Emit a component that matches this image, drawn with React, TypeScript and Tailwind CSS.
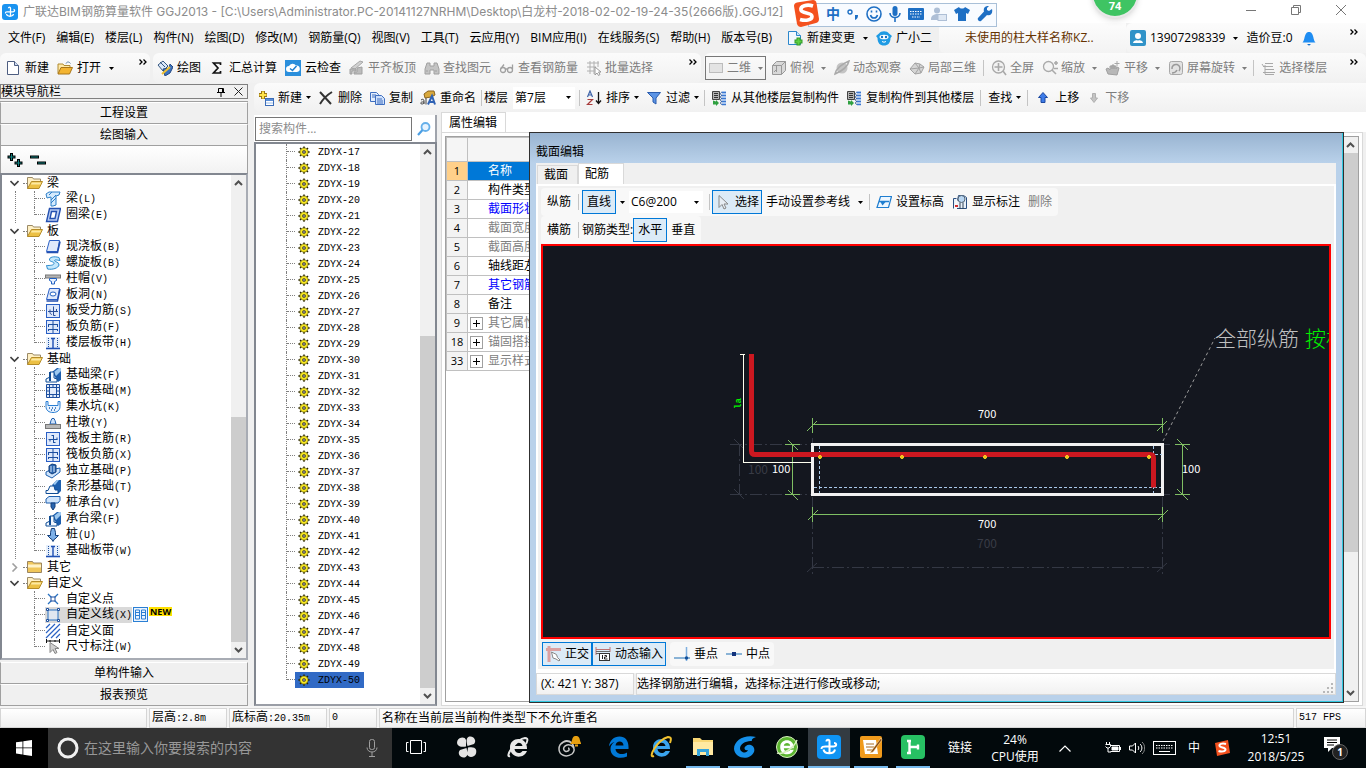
import React from "react";
import type { ReactNode } from "react";

/* ---------- icons ---------- */

const strip = (
  <>
    <rect x="1" y="2" width="14" height="12" fill="#e6effb" />
    <path d="M3.500 3v9M12.500 3v9" stroke="#1d4f9f" strokeDasharray="1 1" />
    <path d="M8 3v10M6 3.500h4" stroke="#1d4fb4" strokeWidth="1.400" />
    <path d="M1 13.500h14" stroke="#1d4fb4" strokeWidth="1.600" />
  </>
);
const beam3d = (
  <>
    <path d="M7 5l5-4h4v12l-3 2z" fill="#1d5fae" />
    <path d="M9 5l5-4h2v3l-5 5z" fill="#9cc8f0" />
    <path d="M1 15v-3l4-2V5h4v6l3 1v3z" fill="#f4f9ff" stroke="#0f4c94" />
    <path d="M5 5v9" stroke="#0f4c94" strokeWidth="2" />
  </>
);

const ICONS: Record<string, ReactNode> = {
  logo: (
    <>
      <rect width="16" height="16" rx="3" fill="#1a93f0" />
      <path d="M6.500 4.200c0-1.500 2-1.500 2 0v8.300M3.500 9.500c0-2 1-1.700 2.500-1.700h5c2 0 2-2.300.5-2.300M4.500 10c.5 3 6.500 3 7 0" stroke="#fff" strokeWidth="1.300" fill="none" />
    </>
  ),
  page: (
    <>
      <path d="M2.500 1.500h7l4 4v9h-11z" fill="#fff" stroke="#4d5d80" />
      <path d="M9.500 1.500v4h4" fill="#cfdcf2" stroke="#4d5d80" />
    </>
  ),
  open: (
    <>
      <path d="M1 13.500V4h5l1 1.500h6V8" fill="#ffe9a6" stroke="#b08a30" />
      <path d="M1 14l3-6.500h11.500L12.500 14z" fill="#f3b431" stroke="#a8761a" />
      <path d="M9 3.500c1-2 3-2 4.500 0" stroke="#5b7fa5" fill="none" />
    </>
  ),
  folder: (
    <>
      <path d="M.5 13.500v-11h5l1 1.500h7v3" fill="#fff0c4" stroke="#9b8a66" />
      <path d="M.5 13.500l4-7h11l-3.500 7z" fill="#ecc044" stroke="#b58c28" />
      <path d="M4.800 7.500h9.500l-1 2h-9.500z" fill="#fde9a0" />
    </>
  ),
  folderShut: (
    <>
      <path d="M.5 13.500v-11h5l1 1.500h8v9.500z" fill="#f0c65a" stroke="#9b8560" />
      <path d="M1 5.500h13v3H1z" fill="#fff2c8" />
    </>
  ),
  paint: (
    <>
      <path d="M1 5l5-4 5 5-5 5z" fill="#dbe8f8" stroke="#365780" />
      <path d="M3 2l5 5" stroke="#365780" />
      <path d="M6 9l6-1 1-4 3 3-3 6-5 3z" fill="#3c72c0" stroke="#254a82" />
      <path d="M5 14l8-7" stroke="#f0c030" strokeWidth="2" />
    </>
  ),
  sigma: <path d="M11.500 5V3h-7L9 8l-4.500 5h7v-2" fill="none" stroke="#111" strokeWidth="1.700" />,
  cloud: (
    <>
      <rect width="16" height="16" fill="#2b8fdc" />
      <path d="M4 12a3 3 0 010-6 4 4 0 017-.5A3 3 0 0112 12z" fill="#fff" />
      <path d="M5 8.500l2.500 2 4-4.500" stroke="#1e7fd0" strokeWidth="1.500" fill="none" />
    </>
  ),
  align: (
    <>
      <path d="M2 8l9-7 3 1-8 7z" fill="#d0d0d0" stroke="#a8a8a8" />
      <path d="M1 9h6v2H3v3H1zM8 8l5-1v7H5v-2h3z" fill="#bcbcbc" stroke="#a0a0a0" />
    </>
  ),
  binoc: <path d="M3 3h3v3h4V3h3l2 6v5h-5v-4H6v4H1V9zM3 10v2M12 10v2" fill="#c4c4c4" stroke="#a0a0a0" />,
  glasses: (
    <g fill="none" stroke="#a0a0a0" strokeWidth="1.300">
      <circle cx="4" cy="10" r="2.500" />
      <circle cx="11" cy="10" r="2.500" />
      <path d="M6.500 9h2M2 8.500l3-4M13.500 9V4.500" />
    </g>
  ),
  gridsel: (
    <>
      <path d="M1 3h12M1 7h9M1 11h7M4 1v13M8 1v13M12 1v6" stroke="#b0b0b0" />
      <path d="M9 7v8l2-2 1.500 2.500 1.500-1-1.500-2.500H15z" fill="#fff" stroke="#999" />
    </>
  ),
  flat: <rect x="1.500" y="3.500" width="13" height="9" fill="#e3e3e3" stroke="#bcbcbc" />,
  cube: (
    <>
      <path d="M1.500 5.500l4-4h9v9l-4 4h-9z" fill="#d8d8d8" stroke="#989898" />
      <path d="M1.500 5.500h9v9M10.500 5.500l4-4M3 12l3-3M5.500 6v6" stroke="#989898" fill="none" />
    </>
  ),
  orbit: (
    <>
      <circle cx="8" cy="8" r="5.500" fill="#c4c4c4" />
      <path d="M1 14C2 9 8 4 15 1c-1 5-7 10-14 13z" fill="none" stroke="#aaa" strokeWidth="1.500" />
    </>
  ),
  local3d: (
    <>
      <path d="M1 9l5-6 5 1 4 3-3 6-6 1z" fill="#d5d5d5" stroke="#a3a3a3" />
      <path d="M6 3l4 5-4 6M11 4l-1 4 5-1M1 9l9-1 2 5" stroke="#a3a3a3" />
    </>
  ),
  full: (
    <>
      <circle cx="7.500" cy="7" r="6" fill="#f2f2f2" stroke="#a8a8a8" strokeWidth="1.300" />
      <path d="M7.500 3v8M3.500 7h8M12 11l3 4" stroke="#a8a8a8" strokeWidth="1.600" />
    </>
  ),
  zoomIcon: (
    <>
      <circle cx="6.500" cy="6.500" r="5" fill="#f4f4f4" stroke="#aaa" strokeWidth="1.300" />
      <path d="M10 10l4 4M12 3h4M14 1v4M12 8.500h4" stroke="#aaa" strokeWidth="1.600" />
    </>
  ),
  hand: (
    <>
      <path d="M3 14l-2-5 2-1 2 2V6h2v3-4h2v4-3h2v3l1-2 2 1-2 7z" fill="#b8b8b8" stroke="#a0a0a0" />
      <path d="M12 1v5M9.500 3.500h5" stroke="#a8a8a8" />
    </>
  ),
  rotate: (
    <>
      <rect x="1.500" y="1.500" width="13" height="13" rx="2" fill="#e2e2e2" stroke="#a8a8a8" />
      <path d="M4 9a4 4 0 117 2M4 13c3 0 4-1 5-3" fill="none" stroke="#999" strokeWidth="1.500" />
    </>
  ),
  floors: <path d="M5 3.500h8M3 6.500h5M7 6.500h6M5 9.500h9M3 12.500h12M5 14.500h9M5 5v9M2 4l2 3" stroke="#a8a8a8" fill="none" />,
  add: (
    <>
      <path d="M5 1v8M1 5h8" stroke="#9a7614" strokeWidth="4" />
      <path d="M5 1.500v7M1.500 5h7" stroke="#ffe34a" strokeWidth="2" />
      <rect x="7.500" y="8.500" width="8" height="7" fill="#fff" stroke="#3c6db8" />
      <path d="M8 10h7" stroke="#5b8ed6" strokeWidth="2" />
      <path d="M8 13h7" stroke="#9cc0ee" />
    </>
  ),
  del: <path d="M2 2l11 12M14 2C9 5 5 9 2 14" stroke="#333" strokeWidth="2" fill="none" />,
  copy: (
    <>
      <path d="M1.500 2.500h6l2 2v7h-8z" fill="#e4eefc" stroke="#3f6fc0" />
      <path d="M3 5h4M3 7h4" stroke="#3f6fc0" />
      <path d="M6.500 5.500h6l3 3v6h-9z" fill="#cfe0fa" stroke="#3f6fc0" />
      <path d="M8 9h5M8 11h6M8 13h6" stroke="#3f6fc0" />
    </>
  ),
  rename: (
    <>
      <path d="M4 4l4-3h6l1 4-4 2-6 1z" fill="#d9a93c" stroke="#8a6420" />
      <path d="M1 10c2-1.500 3-.5 3 1v3M4 12c-4-.5-4 2-2 2 1 0 2-.5 2-1.500M6 8v6.500" stroke="#444" fill="none" />
      <path d="M8 14.500L12 6l3 8.500M9.500 12h4" stroke="#2f62b4" strokeWidth="2" fill="none" />
    </>
  ),
  sort: (
    <>
      <path d="M1.500 7L4 1l2.500 6M2.500 5h3" stroke="#3c62a8" strokeWidth="1.200" fill="none" />
      <path d="M1.500 9.500h5l-5 5h5" stroke="#a83c3c" strokeWidth="1.200" fill="none" />
      <path d="M12.500 2v11M10 10.500l2.500 3 2.500-3" stroke="#111" strokeWidth="1.300" fill="none" />
    </>
  ),
  funnel: <path d="M1.500 2.500h13L10 8v6l-3-2V8z" fill="#5b93e4" stroke="#2a5cae" />,
  floorCopy: (
    <>
      <path d="M1.500 1.500h7v8h-7z" fill="#b4b4b4" stroke="#444" />
      <path d="M3 3.500h4M3 5.500h4M3 7.500h4" stroke="#333" />
      <path d="M2 10.500v4h3v1.500l3-3-3-3v1.500z" fill="#2fa040" />
      <path d="M11 1v14h4V1z" fill="#cfe0f8" />
      <path d="M11 2.500h4M11 5.500h4M11 8.500h4M11 11.500h4M11 14.500h4" stroke="#3c78d0" strokeWidth="1.600" />
      <path d="M11 2c-2 1-2 2.500 0 3.500-2 .5-2 2.500 0 3-2 .5-2 2.500 0 3-2 .5-2 2.500 0 3" stroke="#27559c" />
    </>
  ),
  up: <path d="M8 2.500l4.500 5H10v5H6v-5H3.500z" fill="#3d7be8" stroke="#1c48a0" />,
  down: <path d="M8 12.500l3.500-4.500H9.500V3.500h-3V8h-2z" fill="#c4c4c4" stroke="#b0b0b0" />,
  newChange: (
    <>
      <path d="M1.500 1.500h8l4 4v9h-12z" fill="#f2f9ff" stroke="#2b87cc" />
      <path d="M9.500 1.500v4h4" fill="#cde6f8" stroke="#2b87cc" />
      <path d="M11.500 7.500v8M7.500 11.500h8" stroke="#2f9a2a" strokeWidth="4" />
      <path d="M11.500 8.500v6M8.500 11.500h6" stroke="#5fd042" strokeWidth="2" />
    </>
  ),
  mascot: (
    <>
      <path d="M0 6l3-2.500c2-3 8-3 10 0L16 6l-1.500 2c0 5-2.500 7.500-6.500 7.500S1.500 13 1.500 8z" fill="#1f9be4" />
      <ellipse cx="8" cy="7" rx="4.500" ry="2.300" fill="#fff" />
      <circle cx="6" cy="7" r="1.200" fill="#1770c0" />
      <circle cx="10" cy="7" r="1.200" fill="#1770c0" />
      <path d="M6 11.500q2 1.500 4 0" stroke="#fff" fill="none" />
    </>
  ),
  user: (
    <>
      <rect width="16" height="16" rx="2" fill="#3193c8" />
      <circle cx="8" cy="6" r="3" fill="#fff" />
      <path d="M3 13c0-4 10-4 10 0z" fill="#fff" />
      <path d="M6.500 9l1.500 2 1.500-2z" fill="#3193c8" />
    </>
  ),
  bell: (
    <>
      <path d="M1.500 12.500c2.500-2 1.500-9 5.500-10.500h2c4 1.500 3 8.500 5.500 10.500z" fill="#1f8df2" />
      <path d="M6 14h4l-2 1.800z" fill="#1470cc" />
    </>
  ),
  find: (
    <>
      <circle cx="9.500" cy="6" r="4" fill="#e8f4ff" stroke="#66b0ea" strokeWidth="1.800" />
      <path d="M6.500 9L2 14" stroke="#4c9fe4" strokeWidth="2.200" />
    </>
  ),
  gear: (
    <>
      <path d="M8 .5v15M.5 8h15M2.700 2.700l10.600 10.600M13.300 2.700L2.700 13.300" stroke="#2a2600" strokeWidth="2" />
      <circle cx="8" cy="8" r="5.500" fill="#f8e820" stroke="#4a4400" strokeWidth=".8" />
      <circle cx="8" cy="8" r="1.700" fill="#fff" stroke="#222" strokeWidth="1.400" />
    </>
  ),
  beam: (
    <>
      <path d="M1 3l3-2h11l-1 3-3 1v9l-3 1H6V6L2 7z" fill="#d4eafd" stroke="#2d7fc8" />
      <path d="M6 9l5-5M6 12l5-5M4 4l3-3" stroke="#2d7fc8" />
    </>
  ),
  ring: <path d="M4.500 1.500h11l-3 13h-11zM6.500 4.500l-1.500 7h5l1.500-7z" fill="#b8cdf4" fillRule="evenodd" stroke="#2450b0" strokeWidth="1.400" />,
  slab: (
    <>
      <path d="M4.500 1.500h10l-2 11h-11z" fill="#dfe9fb" stroke="#2a5fc4" />
      <path d="M1.500 13.500h11l2.500-11" stroke="#2450b0" strokeWidth="1.600" fill="none" />
    </>
  ),
  spiral: <path d="M14 2.500C9 1 4 2 4.500 5c.5 2 5 1.500 4.500 3.500-.5 2-4 2-7.500 2l1 3.500c5 1 11-1 11.500-4 .5-3-4.500-3-4.500-4.500C9.500 4.500 12 5 15 5.500z" fill="#c4e8fc" stroke="#2d8ccf" />,
  cap: (
    <>
      <rect x=".5" y="4" width="15" height="3" fill="#b4b4b4" stroke="#777" />
      <path d="M4.500 7.500h7v2l-2 1v2.500h-3v-2.500l-2-1z" fill="#e6f0ff" stroke="#1f5fc0" />
    </>
  ),
  hole: (
    <>
      <path d="M4.500 1.500h10l-2 11h-11z" fill="#dfe9fb" stroke="#2a5fc4" />
      <path d="M1.500 14h11l2.500-12" stroke="#2450b0" strokeWidth="1.400" fill="none" />
      <ellipse cx="8" cy="7" rx="3" ry="2" fill="#fff" stroke="#1f5fc0" />
    </>
  ),
  rebarS: (
    <>
      <rect x="1.500" y="1.500" width="13" height="13" fill="#dfe9fb" stroke="#2a5fc4" />
      <path d="M3 8.500h10M8.500 3.500v9h2M5 6.500v3c0 1 1 2 2 2M11.500 6v3" stroke="#2a4f98" fill="none" />
    </>
  ),
  main: (
    <>
      <rect x="1.500" y="1.500" width="13" height="13" fill="#dfe9fb" stroke="#2a5fc4" />
      <path d="M3.500 8.500h9M8.500 4v8M5 8.500v2M12 6.500v2M8.500 4.500h-2M8.500 11.500h2" stroke="#1d4f9f" fill="none" />
    </>
  ),
  rebarF: (
    <>
      <rect x="1.500" y="1.500" width="13" height="13" fill="#dfe9fb" stroke="#2a5fc4" />
      <path d="M3 5.500h10M3 10.500h10M8 2v12M3.500 5v3M12.500 5v3M3.500 10v2M12.500 10v2" stroke="#1d4f9f" fill="none" />
    </>
  ),
  strip,
  beam3d,
  raft: <path d="M1.500 1.500h13v13h-13zM4.500 4.500h7v7h-7zM4.500 1v14M11.500 1v14M1 4.500h14M1 11.500h14M8 1v3M8 12v3M1 8h3M12 8h3" fill="#e2ecfb" stroke="#1d4f9f" />,
  sump: (
    <>
      <path d="M1 2.500h2v4h10v-4h2v5c0 4-3 6-7 6s-7-2-7-6z" fill="#e8f3ff" stroke="#2a7fd4" />
      <path d="M4 9h1M7 9h1M10 9h1M6 11h1M9 11h1" stroke="#1d5fae" strokeWidth="1.400" />
    </>
  ),
  pier: (
    <>
      <path d="M5 9l1-3.500 1-2h2l1 2L11 9z" fill="#cfe2fb" stroke="#1f5fae" />
      <rect x=".5" y="9.500" width="15" height="4" fill="#b8b8b8" stroke="#777" />
    </>
  ),
  iso: (
    <>
      <path d="M1 9l4-2 10-2v4l-8 6-6-3z" fill="#cfe4fb" stroke="#1d5fae" />
      <path d="M4 9V3l3-2 4 1v7l-4 2z" fill="#2a66b0" stroke="#123f7c" />
      <path d="M6 3v6M9 3v6" stroke="#d7e8fb" />
    </>
  ),
  stripF: (
    <>
      <path d="M7 6l5-5h4v11l-3 3z" fill="#1d5fae" />
      <path d="M8 5l4-4h2l-4 5z" fill="#9cc8f0" />
      <path d="M1 14.500v-3h2L5 7h4l1 4h3v3.500z" fill="#f4f9ff" stroke="#0f4c94" />
    </>
  ),
  pileCap: (
    <>
      <path d="M1 4l3-2.500h11v4L13 8H1z" fill="#cfe4fb" stroke="#1d5fae" />
      <path d="M6 8h4v4l-2 3-2-3z" fill="#2a66b0" stroke="#123f7c" />
    </>
  ),
  pile: <path d="M6.500 1.500h3l1 4v3h3L10 12H9.500L8 14.500 6.500 12H6L2.500 8.500h3v-3z" fill="#7db0e8" stroke="#123f7c" />,
  cross: (
    <>
      <path d="M3 3l10 10M13 3L3 13" stroke="#2a72c0" strokeWidth="1.300" />
      <rect x="6" y="6" width="4" height="4" fill="#fff" stroke="#1d4f9f" />
    </>
  ),
  poly: (
    <>
      <path d="M3 3h10v10H3z" fill="#e0e6f0" stroke="#2a72c0" />
      <path d="M1.500 1.500h2v2h-2zM12.500 1.500h2v2h-2zM1.500 12.500h2v2h-2zM12.500 12.500h2v2h-2z" fill="#fff" stroke="#1d4f9f" />
    </>
  ),
  hatch: <path d="M1 5l4-4M1 10l9-9M1 15L15 1M6 15l9-9M11 15l4-4" stroke="#2a62c4" strokeWidth="1.200" />,
  dim: (
    <>
      <path d="M1.500 0v4M14.500 0v4M2 2h12M5 1v2M10 1v2" stroke="#111" />
      <path d="M5 3.500v10l3-3 2 4 2-1-2-4h4z" fill="#d0d0d0" stroke="#888" />
    </>
  ),
  book: (
    <>
      <rect x=".5" y=".5" width="14" height="14" fill="#eaf4ff" stroke="#2a7fd4" />
      <path d="M2.500 3h4v9h-4zM8.500 3h4v9h-4zM3 5.500h3M3 8.500h3M9 5.500h3M9 8.500h3" stroke="#2a7fd4" fill="none" />
    </>
  ),
  cursor: <path d="M4 1.500v12l3-3 2 4.500 2-1-2-4h4z" fill="#e8eef4" stroke="#888" />,
  level: (
    <>
      <path d="M4.500 2.500h11l-3 11H1z" fill="#eef7ff" stroke="#1f7ed0" strokeWidth="1.200" />
      <path d="M3 7.500h10" stroke="#1f7ed0" strokeWidth="1.500" />
      <path d="M4.500 8h5l-3 3.500z" fill="#1f7ed0" />
    </>
  ),
  showDim: (
    <>
      <path d="M1.500 14.500v-10h3M5 14.500h9.500v-11l-3-2h-5l-1 5" fill="#e8f0fa" stroke="#2a4f80" />
      <circle cx="9.500" cy="5" r="3.500" fill="#b9d6f2" stroke="#567" />
      <path d="M8 8.500V15M11 8.500V15" stroke="#345" />
      <path d="M3 12h3" stroke="#d03030" strokeWidth="2" />
    </>
  ),
  ortho: (
    <>
      <path d="M1 3.500h15M4 0v16" stroke="#dca0a0" strokeWidth="3" />
      <path d="M6.500 6l5 2.500 1 3L15 14l-1 1-3-2-3-1z" fill="#fff" stroke="#888" />
    </>
  ),
  dyn: (
    <>
      <path d="M1 1v8M15 1v5M1 3.500h14" stroke="#c07070" />
      <rect x="4.500" y="7.500" width="10" height="7" fill="#fff" stroke="#333" />
      <path d="M7.500 9v4M9.500 9.500h2v1.500h-2v2h3" stroke="#222" fill="none" />
      <path d="M1 5.500h14M1 7.500h3" stroke="#666" />
    </>
  ),
  perp: (
    <>
      <path d="M0 12h16" stroke="#1c6fb4" />
      <path d="M12.500 1v14" stroke="#7fb0e0" strokeWidth="1.500" />
      <circle cx="12.500" cy="12" r="1.700" fill="#134f9a" />
    </>
  ),
  mid: (
    <>
      <path d="M0 8h16" stroke="#1c6fb4" />
      <rect x="6" y="6" width="4" height="4" fill="#12327c" />
    </>
  ),
};

function Icon({ n, className = "h-4 w-4" }: { n: string; className?: string }) {
  return (
    <svg viewBox="0 0 16 16" className={`shrink-0 ${className}`} fill="none" aria-hidden="true">
      {ICONS[n]}
    </svg>
  );
}

function Caret({ className = "" }: { className?: string }) {
  return (
    <svg viewBox="0 0 5 3" className={`h-[3px] w-[5px] shrink-0 ${className}`} aria-hidden="true">
      <path d="M0 0h5L2.500 3z" fill="currentColor" />
    </svg>
  );
}

function More() {
  return (
    <svg viewBox="0 0 8 6" className="h-[6px] w-2 shrink-0" fill="none" stroke="#000" strokeWidth="1.300" aria-label="更多">
      <path d="M.5.5L3 3 .5 5.500M4.500.5L7 3 4.500 5.500" />
    </svg>
  );
}

function Sep({ wide }: { wide?: boolean }) {
  return <span className={`h-4 w-px shrink-0 bg-[#c4c4c4] ${wide ? "mx-[3px]" : "mx-[2px]"}`} />;
}

/* Latin characters in the list font take half the width of a CJK one. */
function Mono({ children }: { children: string }) {
  return (
    <>
      {children.split(/([\x20-\x7e]+)/).map((part, i) =>
        i % 2 ? (
          <span key={i} className="whitespace-pre font-['Liberation_Mono',monospace] text-[10px]">
            {part}
          </span>
        ) : (
          part
        ),
      )}
    </>
  );
}

type ToolProps = { icon?: string; label: string; caret?: boolean; tight?: boolean; off?: boolean; frame?: "grey" | "blue" };

function Tool({ icon, label, caret, tight, off, frame }: ToolProps) {
  const border = frame === "blue" ? "border border-[#0078d7] bg-[#dcebf7]" : frame === "grey" ? "border border-[#777]" : "";
  return (
    <button
      type="button"
      disabled={off}
      className={`flex h-6 shrink-0 items-center ${frame && icon ? "px-[2px]" : "px-1"} ${off ? "gap-[3px] text-[#7d7d7d]" : "gap-1 text-black"} ${border}`}
    >
      {icon && <Icon n={icon} />}
      <span>{label}</span>
      {caret && <Caret className={tight ? "" : "ml-1"} />}
    </button>
  );
}

/* ---------- data ---------- */

const MENUS = ["文件(F)", "编辑(E)", "楼层(L)", "构件(N)", "绘图(D)", "修改(M)", "钢筋量(Q)", "视图(V)", "工具(T)", "云应用(Y)", "BIM应用(I)", "在线服务(S)", "帮助(H)", "版本号(B)"];

type Group = { name: string; closed?: boolean; items: [string, string][] };

const TREE: Group[] = [
  { name: "梁", items: [["beam", "梁(L)"], ["ring", "圈梁(E)"]] },
  {
    name: "板",
    items: [["slab", "现浇板(B)"], ["spiral", "螺旋板(B)"], ["cap", "柱帽(V)"], ["hole", "板洞(N)"], ["rebarS", "板受力筋(S)"], ["rebarF", "板负筋(F)"], ["strip", "楼层板带(H)"]],
  },
  {
    name: "基础",
    items: [["beam3d", "基础梁(F)"], ["raft", "筏板基础(M)"], ["sump", "集水坑(K)"], ["pier", "柱墩(Y)"], ["main", "筏板主筋(R)"], ["rebarF", "筏板负筋(X)"], ["iso", "独立基础(P)"], ["stripF", "条形基础(T)"], ["pileCap", "桩承台(V)"], ["beam3d", "承台梁(F)"], ["pile", "桩(U)"], ["strip", "基础板带(W)"]],
  },
  { name: "其它", closed: true, items: [] },
  { name: "自定义", items: [["cross", "自定义点"], ["poly", "自定义线(X)"], ["hatch", "自定义面"], ["dim", "尺寸标注(W)"]] },
];

const MEMBERS = Array.from({ length: 34 }, (_, i) => `ZDYX-${i + 17}`);

const PROPS: { n: number; name: string; tone: string; plus?: boolean }[] = [
  { n: 1, name: "名称", tone: "bg-[#0078d7] text-white" },
  { n: 2, name: "构件类型", tone: "text-black" },
  { n: 3, name: "截面形状", tone: "text-[#0000ff]" },
  { n: 4, name: "截面宽度", tone: "text-[#808080]" },
  { n: 5, name: "截面高度", tone: "text-[#808080]" },
  { n: 6, name: "轴线距左", tone: "text-black" },
  { n: 7, name: "其它钢筋", tone: "text-[#0000ff]" },
  { n: 8, name: "备注", tone: "text-black" },
  { n: 9, name: "其它属性", tone: "text-[#808080]", plus: true },
  { n: 18, name: "锚固搭接", tone: "text-[#808080]", plus: true },
  { n: 33, name: "显示样式", tone: "text-[#808080]", plus: true },
];

/* ---------- top bars ---------- */

function TitleBar() {
  return (
    <header className="relative flex h-[23px] shrink-0 items-center bg-white pl-[2px] text-[#8c8c8c]">
      <Icon n="logo" />
      <h1 className="ml-[5px] whitespace-pre font-['Inter','Noto_Sans_CJK_SC',sans-serif] text-xs leading-4">广联达BIM钢筋算量软件 GGJ2013 - [C:\Users\Administrator.PC-20141127NRHM\Desktop\白龙村-2018-02-02-19-24-35(2666版).GGJ12]</h1>
      <div className="ml-auto flex gap-[35px] pb-1 pr-5">
        <button type="button" aria-label="最小化">
          <svg viewBox="0 0 10 10" className="h-[10px] w-[10px]"><path d="M0 5.500h10" stroke="#777" /></svg>
        </button>
        <button type="button" aria-label="还原">
          <svg viewBox="0 0 10 10" className="h-[10px] w-[10px]" fill="none" stroke="#777"><path d="M.5 2.500h7v7h-7zM2.500 2.500v-2h7v7h-2" /></svg>
        </button>
        <button type="button" aria-label="关闭">
          <svg viewBox="0 0 10 10" className="h-[10px] w-[10px]" stroke="#777"><path d="M0 0l10 10M10 0L0 10" /></svg>
        </button>
      </div>
    </header>
  );
}

function ImeBar() {
  return (
    <div className="absolute left-[792px] top-0 z-20 flex h-7 items-center">
      <div className="absolute bottom-[1px] left-4 right-0 top-[3px] border border-[#a9c0d8] bg-[#f8fbff]" />
      <svg viewBox="0 0 28 28" className="relative h-7 w-7">
        <path d="M2 6Q2 3 5 2.500L21 0q3 0 3.500 3L27 19q0 3-3 4L9 27q-3 0-4-3z" fill="#f4511e" />
        <path d="M21 6C15 4 8 6 9 10c1 4 11 2 11 6.500 0 4-7 4.500-12 3" stroke="#fff" strokeWidth="3.600" fill="none" />
      </svg>
      <div className="relative flex items-center gap-[7px] pl-[6px] pr-1 text-[#1e6fc4]">
        <span className="text-[14px] font-bold leading-4">中</span>
        <svg viewBox="0 0 12 14" className="h-[14px] w-3"><circle cx="3" cy="5" r="2" fill="none" stroke="currentColor" strokeWidth="1.400" /><path d="M8 8h3c0 3-1 4-3 5z" fill="currentColor" /></svg>
        <svg viewBox="0 0 16 16" className="h-4 w-4" fill="none" stroke="currentColor" strokeWidth="1.600"><circle cx="8" cy="8" r="7" /><path d="M4.500 9c1 4 6 4 7 0M5.500 4.500v2M10.500 4.500v2" /></svg>
        <svg viewBox="0 0 12 16" className="h-4 w-3"><rect x="3.500" width="5" height="10" rx="2.500" fill="currentColor" /><path d="M1 7c0 6 10 6 10 0M6 12v4" stroke="currentColor" strokeWidth="1.600" fill="none" /></svg>
        <svg viewBox="0 0 16 12" className="h-3 w-4"><rect width="16" height="12" rx="1" fill="currentColor" /><path d="M2 3.500h12M2 6h12M4 9h8" stroke="#fff" strokeDasharray="1.500 1" /></svg>
        <svg viewBox="0 0 16 14" className="h-[14px] w-4" fill="#aebfd6"><circle cx="6" cy="3.500" r="3" /><path d="M0 12c0-6 10-6 11-3v4H0z" /><rect x="7" y="7.500" width="8.500" height="6" fill="#dfe8f4" stroke="#aebfd6" /></svg>
        <svg viewBox="0 0 16 14" className="h-[14px] w-4" fill="currentColor"><path d="M5 0c1 2 5 2 6 0l5 3-2 4-2-1v8H4V6L2 7 0 3z" /></svg>
        <svg viewBox="0 0 16 16" className="h-4 w-4" fill="currentColor"><path d="M15 3l-3 2-2-1V2l2-2C8-.5 6 2.500 7 5.500L1 12c-1 2 1 4 3 3l6-6c4 1 6-2 5-6z" /></svg>
      </div>
    </div>
  );
}

function MenuBar() {
  return (
    <nav className="flex h-[30px] shrink-0 items-center bg-[#f0f0f0] text-black">
      <div className="flex w-[783px] shrink-0 items-center gap-[11px] whitespace-nowrap pl-2">
        {MENUS.map((m) => (
          <button key={m} type="button">{m}</button>
        ))}
      </div>
      <Tool icon="newChange" label="新建变更" caret />
      <Tool icon="mascot" label="广小二" />
      <div className="ml-[3px] flex h-full flex-1 items-center rounded-l-md bg-gradient-to-b from-[#fcfcfc] to-[#f3f3f3] pl-[26px] text-[#663300]">
        未使用的柱大样名称KZ..
      </div>
      <div className="flex h-full w-[240px] shrink-0 items-center rounded-l-md bg-gradient-to-b from-[#fcfcfc] to-[#f3f3f3]">
        <Tool icon="user" label="13907298339" caret />
        <Tool label="造价豆:0" />
        <Icon n="bell" className="ml-1 h-4 w-4" />
        <span className="ml-auto pb-3 pr-2"><More /></span>
      </div>
    </nav>
  );
}

function MainToolbar() {
  const bar = "flex h-[30px] items-center rounded-md bg-gradient-to-b from-[#fbfbfb] to-[#f1f1f1]";
  return (
    <div className="flex h-[30px] shrink-0 gap-[3px] bg-[#f0f0f0]">
      <div className={`${bar} w-[150px] shrink-0 pl-px`}>
        <Tool icon="page" label="新建" />
        <Tool icon="open" label="打开" caret />
        <span className="ml-auto pb-3 pr-[3px]"><More /></span>
      </div>
      <div className={`${bar} w-[548px] shrink-0`}>
        <Tool icon="paint" label="绘图" />
        <Tool icon="sigma" label="汇总计算" />
        <Tool icon="cloud" label="云检查" />
        <Tool icon="align" label="平齐板顶" off />
        <Tool icon="binoc" label="查找图元" off />
        <Tool icon="glasses" label="查看钢筋量" off />
        <Tool icon="gridsel" label="批量选择" off />
        <span className="ml-auto pb-3 pr-1"><More /></span>
      </div>
      <div className={`${bar} flex-1 pl-px`}>
        <Tool icon="flat" label="二维" caret off frame="grey" />
        <span className="w-px" />
        <Tool icon="cube" label="俯视" caret off />
        <Tool icon="orbit" label="动态观察" off />
        <Tool icon="local3d" label="局部三维" off />
        <Sep wide />
        <Tool icon="full" label="全屏" off />
        <Tool icon="zoomIcon" label="缩放" caret off />
        <Tool icon="hand" label="平移" caret off />
        <Tool icon="rotate" label="屏幕旋转" caret off />
        <Sep />
        <Tool icon="floors" label="选择楼层" off />
        <span className="ml-auto pb-3 pr-2"><More /></span>
      </div>
    </div>
  );
}

function MemberToolbar() {
  return (
    <div className="flex h-[29px] shrink-0 items-center -space-x-px rounded-l-md bg-gradient-to-b from-[#fbfbfb] to-[#f1f1f1]">
      <Tool icon="add" label="新建" caret tight />
      <Tool icon="del" label="删除" />
      <Tool icon="copy" label="复制" />
      <Tool icon="rename" label="重命名" />
      <Sep />
      <label htmlFor="floor" className="shrink-0">楼层</label>
      <span className="relative ml-[6px] mr-[2px] flex w-[62px] shrink-0 items-center bg-white">
        <select id="floor" className="h-[22px] w-full appearance-none bg-transparent pl-[2px]">
          <option>第7层</option>
        </select>
        <Caret className="absolute right-1" />
      </span>
      <Sep />
      <Tool icon="sort" label="排序" caret tight />
      <Tool icon="funnel" label="过滤" caret tight />
      <Sep />
      <Tool icon="floorCopy" label="从其他楼层复制构件" />
      <Tool icon="floorCopy" label="复制构件到其他楼层" />
      <Sep wide />
      <Tool label="查找" caret tight />
      <Sep wide />
      <Tool icon="up" label="上移" />
      <Tool icon="down" label="下移" off />
    </div>
  );
}

/* ---------- scroll bar ---------- */

function Chevron({ up }: { up?: boolean }) {
  return (
    <svg viewBox="0 0 9 6" className="h-[6px] w-[9px] shrink-0" fill="none" stroke="#505050" strokeWidth="2">
      <path d={up ? "M1 5l3.500-3.500L8 5" : "M1 1l3.500 3.500L8 1"} />
    </svg>
  );
}

function Scroll({ thumb }: { thumb: string }) {
  return (
    <div className="flex w-[15px] shrink-0 flex-col items-center justify-between bg-[#f0f0f0]">
      <span className="flex h-4 items-center"><Chevron up /></span>
      <div className="flex min-h-0 w-full flex-1 flex-col">
        <div className={`w-full bg-[#cdcdcd] ${thumb}`} />
      </div>
      <span className="flex h-4 items-center"><Chevron /></span>
    </div>
  );
}

/* ---------- left navigation ---------- */

function NavButton({ children }: { children: string }) {
  return (
    <button type="button" className="h-[22px] w-full shrink-0 border-b border-l border-r border-t border-b-[#a0a0a0] border-l-[#a0a0a0] border-r-[#a0a0a0] border-t-white bg-[#f0f0f0] text-center">
      {children}
    </button>
  );
}

function NavGroup({ group, last }: { group: Group; last: boolean }) {
  return (
    <li>
      <div className="flex h-4 items-center pl-[7px]">
        <svg viewBox="0 0 9 9" className="h-[9px] w-[9px]" fill="none" stroke={group.closed ? "#a0a0a0" : "#404040"} strokeWidth="1.600">
          <path d={group.closed ? "M2.500.5l4 4-4 4" : "M.5 2l4 4 4-4"} />
        </svg>
        <span className="ml-1 w-1 border-b border-dotted border-[#808080]" />
        <Icon n={group.closed ? "folderShut" : "folder"} />
        <span className="ml-1">{group.name}</span>
      </div>
      {group.items.length > 0 && (
        <ul className={`ml-3 border-l border-dotted pl-[18px] ${last ? "border-transparent" : "border-[#808080]"}`}>
          {group.items.map(([icon, label], i) => {
            const active = label === "自定义线(X)";
            return (
              <li key={label} className="flex h-4">
                <span className={`border-l border-dotted border-[#808080] ${i === group.items.length - 1 ? "h-2" : "h-4"}`} />
                <span className="h-2 w-[10px] border-b border-dotted border-[#808080]" />
                <span className={`flex items-center ${active ? "bg-[#d9d9d9]" : ""}`}>
                  <Icon n={icon} />
                  <span className="ml-[5px] whitespace-nowrap"><Mono>{label}</Mono></span>
                </span>
                {active && (
                  <>
                    <Icon n="book" className="ml-px h-4 w-4" />
                    <span className="h-[9px] bg-[#ffe000] px-px text-[9px] font-bold leading-[9px]">NEW</span>
                  </>
                )}
              </li>
            );
          })}
        </ul>
      )}
    </li>
  );
}

function NavPanel() {
  return (
    <aside className="flex w-[248px] shrink-0 flex-col">
      <div className="mb-[2px] mt-px flex h-[15px] shrink-0 items-center border border-[#808080] pr-1">
        <h2>模块导航栏</h2>
        <button type="button" aria-label="固定" className="ml-auto">
          <svg viewBox="0 0 10 10" className="h-[10px] w-[10px]" fill="none" stroke="#000"><path d="M2.500 1.500h5v4h-5zM1 5.500h8M5 6v4M6.500 1v5" /></svg>
        </button>
        <button type="button" aria-label="关闭" className="ml-2">
          <svg viewBox="0 0 9 9" className="h-[9px] w-[9px]" stroke="#222"><path d="M.5.5l8 8M8.500.5l-8 8" /></svg>
        </button>
      </div>
      <div className="flex min-h-0 flex-1 flex-col border-t border-[#a0a0a0]">
        <NavButton>工程设置</NavButton>
        <NavButton>绘图输入</NavButton>
        <div className="flex h-[27px] shrink-0 items-center gap-[7px] border-l border-r border-[#a0a0a0] bg-gradient-to-b from-white to-[#f2f2f2] pl-[6px]">
          <svg viewBox="0 0 16 16" className="h-4 w-4"><path d="M4.500 1v8M.5 5h8M11.500 7v8M7.500 11h8" stroke="#000" strokeWidth="3" /><path d="M4.500 2v6M1.500 5h6M11.500 8v6M8.500 11h6" stroke="#108080" /></svg>
          <svg viewBox="0 0 16 16" className="h-4 w-4"><path d="M0 5h9M7 11h9" stroke="#000" strokeWidth="3" /><path d="M1 5h7M8 11h7" stroke="#108080" /></svg>
        </div>
        <div className="mb-[2px] flex min-h-0 flex-1 justify-between border-2 border-[#828790] border-b-[#a8acb4] border-r-[#a8acb4] bg-white">
          <ul className="pl-px">
            {TREE.map((g, i) => (
              <NavGroup key={g.name} group={g} last={i === TREE.length - 1} />
            ))}
          </ul>
          <Scroll thumb="mt-auto h-1/2" />
        </div>
        <NavButton>单构件输入</NavButton>
        <NavButton>报表预览</NavButton>
      </div>
    </aside>
  );
}

/* ---------- member list ---------- */

function MemberPanel() {
  return (
    <section className="flex w-[183px] shrink-0 flex-col">
      <div className="mt-[3px] flex h-[27px] shrink-0 items-center border-r-2 border-[#a0a4ac] bg-white">
        <input aria-label="搜索构件" placeholder="搜索构件..." className="ml-px h-6 w-[157px] border border-[#767676] bg-white px-[3px] placeholder:text-[#8c8c8c]" />
        <button type="button" aria-label="搜索" className="ml-1"><Icon n="find" /></button>
      </div>
      <div className="flex min-h-0 flex-1 justify-between overflow-hidden border-2 border-[#828790] border-b-[#9a9ea6] bg-white">
        <ul className="pl-[30px]">
          {MEMBERS.map((m, i) => {
            const last = i === MEMBERS.length - 1;
            return (
              <li key={m} className="flex h-4">
                <span className={`border-l border-dotted border-[#808080] ${last ? "h-2" : "h-4"}`} />
                <span className="h-2 w-2 border-b border-dotted border-[#808080]" />
                <span className={`flex items-center pl-[3px] pr-1 ${last ? "bg-[#316ac5]" : ""}`}>
                  <Icon n="gear" className="h-3 w-3" />
                  <span className="ml-2"><Mono>{m}</Mono></span>
                </span>
              </li>
            );
          })}
        </ul>
        <Scroll thumb="mt-auto h-2/3" />
      </div>
    </section>
  );
}

/* ---------- section drawing ---------- */

function Drawing() {
  return (
    <svg viewBox="543 246 786 391" className="block h-full w-full" preserveAspectRatio="xMidYMid meet" fill="none" fontFamily='"Noto Sans CJK SC", sans-serif' fontSize="11">
      <g stroke="#343844" strokeDasharray="12 3 2 3" shapeRendering="crispEdges">
        <path d="M730 444.500h82M730 494.500h82M739.500 444v50M812.500 497v80M1162.500 497v80M812 567.500h350M1164 444.500h6M1164 494.500h6" />
      </g>
      <path d="M734 439l10 10M734 489l10 10M807 572l10-9M1157 572l10-9M812.500 438v6" stroke="#343844" />
      <g stroke="#7fbf63" shapeRendering="crispEdges">
        <path d="M812 424.500h351M812.500 418v15M1162.500 418v15M812 514.500h351M812.500 507v15M1162.500 507v15M792.500 444v51M785 444.500h15M785 494.500h15M1182.500 444v51M1175 444.500h15M1175 494.500h15" />
      </g>
      <path d="M807 431l10-10M1157 431l10-10M808 520l10-10M1158 520l10-10M788 440l10 10M788 490l10 10M1177 439l11 11M1177 489l11 11" stroke="#7fbf63" />
      <rect x="812.500" y="444.500" width="350" height="50" stroke="#f2f2f2" strokeWidth="3" shapeRendering="crispEdges" />
      <path d="M814 487.500h347M819.500 446v47M1153.500 446v47M1155 454.500h7" stroke="#a8c8e8" strokeDasharray="3 2" shapeRendering="crispEdges" />
      <path d="M751.500 354v97q0 3.500 3.500 3.500h395q3.500 0 3.500 3.500v29.500" stroke="#cc1820" strokeWidth="5" />
      <path d="M740 354.500h5M743.500 354v108.500h68" stroke="#fffff0" shapeRendering="crispEdges" />
      <g fill="#f5a623" stroke="#f8e71c">
        {[820, 902, 985, 1067, 1149].map((x) => (
          <circle key={x} cx={x} cy="457" r="1.500" />
        ))}
      </g>
      <path d="M1163 441l52-103" stroke="#9a9a9a" strokeDasharray="3 3" />
      <g fill="#fff">
        <text x="978" y="418">700</text>
        <text x="978" y="528">700</text>
        <text x="772" y="473">100</text>
        <text x="1182" y="473">100</text>
      </g>
      <g fill="#393c46" fontSize="12">
        <text x="977" y="548">700</text>
        <text x="748" y="474">100</text>
      </g>
      <text fill="#00f000" fontSize="9" fontWeight="700" fontFamily='"Liberation Mono", monospace' transform="translate(741 409) rotate(-90)">la</text>
      <text x="1215" y="346" fontSize="21" fontWeight="300" fill="#c0c0c0">全部纵筋</text>
      <text x="1305" y="346" fontSize="21" fontWeight="300" fill="#00f000">按标</text>
    </svg>
  );
}

function SectionDialog() {
  const row = "flex h-7 w-max items-center rounded bg-[#f8f8f8] px-[2px]";
  return (
    <div role="dialog" aria-label="截面编辑" className="absolute bottom-[3px] left-[88px] right-[22px] top-5 z-10 flex flex-col border border-[#303030] bg-[#b9d1ea]">
      <div className="flex min-h-0 flex-1 flex-col border-b border-r border-[#30c8e0] pb-[6px] pl-[6px] pr-[6px]">
        <div className="-mx-[6px] flex h-[30px] shrink-0 items-center bg-gradient-to-b from-[#99b4d1] to-[#b9d1ea] pl-[6px] pt-2">截面编辑</div>
        <div className="flex min-h-0 flex-1 flex-col bg-[#f0f0f0]">
          <div role="tablist" className="flex h-[21px] shrink-0 items-end pl-px">
            <button type="button" role="tab" className="h-[19px] border border-b-0 border-[#d9d9d9] pl-[6px] pr-[9px]">截面</button>
            <button type="button" role="tab" aria-selected="true" className="h-[21px] border-x border-t border-[#d9d9d9] bg-white pl-[6px] pr-[14px]">配筋</button>
          </div>
          <div className="flex min-h-0 flex-1 flex-col border-2 border-white">
            <div className="flex min-h-0 flex-1 flex-col pl-[3px] pr-[3px] pt-[2px]">
              <div className={row}>
                <Tool label="纵筋" />
                <Sep wide />
                <Tool label="直线" frame="blue" />
                <Caret className="ml-1" />
                <span className="relative mx-1 flex w-[74px] items-center bg-white">
                  <select aria-label="纵筋规格" className="h-[22px] w-full appearance-none bg-transparent pl-[2px]">
                    <option>C6@200</option>
                  </select>
                  <Caret className="absolute right-1" />
                </span>
                <Sep />
                <Tool icon="cursor" label="选择" frame="blue" />
                <Tool label="手动设置参考线" caret />
                <Sep />
                <Tool icon="level" label="设置标高" />
                <Tool icon="showDim" label="显示标注" />
                <Tool label="删除" off />
              </div>
              <div className={row}>
                <Tool label="横筋" />
                <Sep wide />
                <span>钢筋类型:</span>
                <Tool label="水平" frame="blue" />
                <Tool label="垂直" />
              </div>
              <div className="min-h-0 flex-1 overflow-hidden border-2 border-[#ff0000] bg-[#14171f]">
                <Drawing />
              </div>
              <div className="flex h-[30px] shrink-0 items-center pl-px">
                <Tool icon="ortho" label="正交" frame="blue" />
                <Tool icon="dyn" label="动态输入" frame="blue" />
                <div className="ml-1 flex rounded bg-[#f8f8f8]">
                  <Tool icon="perp" label="垂点" />
                  <Tool icon="mid" label="中点" />
                </div>
              </div>
            </div>
          </div>
          <div className="flex h-6 shrink-0 items-stretch gap-[2px] border-t-2 border-white bg-[#f0f0f0]">
            <span className="flex w-[98px] items-center border border-[#d9d9d9] bg-gradient-to-b from-white to-[#f1f1f1] pl-1">(X: 421 Y: 387)</span>
            <span className="flex flex-1 items-center justify-between border border-[#d9d9d9] bg-gradient-to-b from-white to-[#f1f1f1]">
              选择钢筋进行编辑，选择标注进行修改或移动;
              <svg viewBox="0 0 11 11" className="mr-px mt-2 h-[11px] w-[11px]" fill="#b8b8b8"><path d="M8 0h2v2H8zM8 4h2v2H8zM4 4h2v2H4zM0 8h2v2H0zM4 8h2v2H4zM8 8h2v2H8z" /></svg>
            </span>
          </div>
        </div>
      </div>
    </div>
  );
}

/* ---------- property editor ---------- */

function PropertyPanel() {
  return (
    <section className="relative ml-1 flex min-w-0 flex-1 flex-col">
      <div className="flex h-5 shrink-0 bg-[#f0f0f0]">
        <h2 className="flex w-[65px] items-center border-x border-t border-[#d9d9d9] bg-white pl-[7px]">属性编辑</h2>
        <span className="flex-1 bg-white" />
      </div>
      <div className="mr-[3px] flex min-h-0 flex-1 border border-[#d9d9d9] bg-white p-[3px]">
        <div className="flex min-w-0 flex-1 border border-[#a0a0a0]">
          <div className="min-w-0 flex-1">
            <table className="w-full border-collapse">
              <thead>
                <tr className="h-6">
                  <th aria-label="序号" className="w-[21px] border border-[#c0c0c0] bg-[#f5f5f5]" />
                  <th aria-label="属性名称" className="border border-[#c0c0c0] bg-[#f5f5f5]" />
                </tr>
              </thead>
              <tbody>
                {PROPS.map((p) => (
                  <tr key={p.n} className="h-[19px]">
                    <td className={`border border-[#c0c0c0] p-0 text-center text-[11px] leading-4 ${p.n === 1 ? "bg-[#ffd08a]" : "bg-[#f3f3f3]"}`}>{p.n}</td>
                    <td className={`whitespace-nowrap border border-[#c0c0c0] p-0 leading-4 ${p.tone}`}>
                      <span className="flex items-center">
                        <span className="flex w-5 shrink-0 pl-[2px]">
                          {p.plus && (
                            <svg viewBox="0 0 13 13" className="h-[13px] w-[13px]"><rect x=".5" y=".5" width="12" height="12" fill="#fff" stroke="#a0a0a0" /><path d="M3 6.500h7M6.500 3v7" stroke="#000" /></svg>
                          )}
                        </span>
                        {p.name}
                      </span>
                    </td>
                  </tr>
                ))}
              </tbody>
            </table>
          </div>
          <Scroll thumb="h-3/4" />
        </div>
      </div>
      <SectionDialog />
    </section>
  );
}

/* ---------- bottom bars ---------- */

function StatusBar() {
  const cell = "flex items-center border border-[#d5d5d5] bg-gradient-to-b from-white to-[#f0f0f0] pl-[2px]";
  return (
    <footer className="flex h-[22px] shrink-0 gap-[2px] bg-[#f5f5f5] pt-[2px]">
      <span className={`${cell} w-[147px]`} />
      <span className={`${cell} w-[78px]`}><span><Mono>层高:2.8m</Mono></span></span>
      <span className={`${cell} w-[98px]`}><span><Mono>底标高:20.35m</Mono></span></span>
      <span className={`${cell} w-12`}><Mono>0</Mono></span>
      <span className={`${cell} flex-1`}>名称在当前层当前构件类型下不允许重名</span>
      <span className={`${cell} w-[70px]`}><Mono>517 FPS</Mono></span>
    </footer>
  );
}

function Task({ label, run, active, children }: { label: string; run?: boolean; active?: boolean; children: ReactNode }) {
  return (
    <button type="button" aria-label={label} className={`flex w-[42px] shrink-0 items-center justify-center ${active ? "bg-[#333b42]" : ""}`}>
      <span className={`flex h-full items-center justify-center border-b-2 ${active ? "w-full" : "w-[34px]"} ${run ? "border-[#76b9ed]" : "border-transparent"}`}>
        <svg viewBox="0 0 24 24" className="h-6 w-6" fill="none" aria-hidden="true">{children}</svg>
      </span>
    </button>
  );
}

const edgeE = "M21.500 14H8.500c.5 5 6.500 6.500 11.500 3.500v4C12 25 3.500 21.500 3.500 14c0-3 1.500-5.500 4-7-2 .5-4 2-5.500 4.500C2.500 5.500 7 1.500 12.500 1.500c6 0 9.500 4.500 9 12.500zM8.500 10.500h8c0-5.500-7.500-5.500-8 0z";
const ieE = "M21 14H8.500c.5 5 6.500 5 8 2H21c-3.500 9-17 7-17-3.500C4 1 21.500 1 21 14zM8.500 11H16.500c-.5-4.500-7.500-4.500-8 0z";

function Taskbar() {
  return (
    <div className="flex h-10 shrink-0 items-stretch bg-[#02090c] text-white">
      <button type="button" aria-label="开始" className="flex w-12 shrink-0 items-center justify-center bg-black">
        <svg viewBox="0 0 16 16" className="h-4 w-4" fill="#fff"><path d="M0 2.300L6.500 1.400v6.100H0zM7.300 1.300L16 0v7.500H7.300zM0 8.300h6.500v6.200L0 13.600zM7.300 8.300H16V16l-8.700-1.200z" /></svg>
      </button>
      <div className="flex w-[344px] shrink-0 items-center bg-[#333] pl-[9px] pr-[14px]">
        <svg viewBox="0 0 22 22" className="h-[22px] w-[22px] shrink-0" fill="none" stroke="#f0f0f0" strokeWidth="3"><circle cx="11" cy="11" r="9" /></svg>
        <input aria-label="搜索" placeholder="在这里输入你要搜索的内容" className="ml-[5px] min-w-0 flex-1 bg-transparent text-sm placeholder:text-[#989898]" />
        <svg viewBox="0 0 12 18" className="h-[18px] w-3" fill="none" stroke="#a0a0a0"><rect x="3.500" y=".5" width="5" height="10" rx="2" /><path d="M1 8.500c0 6 10 6 10 0M6 13v4M3 17.500h6" /></svg>
      </div>
      <div className="flex w-[206px] shrink-0 items-stretch justify-between pl-[3px] pr-2">
        <Task label="任务视图"><path d="M6.500 5.500h11v13h-11zM4.500 7.500h-2v9h2M19.500 7.500h2v9h-2" stroke="#fff" /></Task>
        <Task label="风扇">
          <path d="M11 11.500C3 13 1 9 2.500 5.500S10 1 11 5zM12.500 11c-2-7-.5-9.500 3-9.500S22 6 19 9zM13 12.500c8-1.500 9 2.500 8 6s-7 5-9 1zM11.500 13c2 7 .5 9.500-3 9.500S2 18 5 15z" fill="#e4e4e4" />
        </Task>
        <Task label="浏览器"><path d={ieE} fill="#e8e8e8" fillRule="evenodd" /><path d="M4 21C-2 23 10 4 19 3c4 0 2 4 1 6" stroke="#e8e8e8" strokeWidth="2" /></Task>
        <Task label="提醒">
          <path d="M15 8C9 3 2 8 2 14s7 9 13 5c5-5 0-10-5-9-6 2-3 8 1 6 2-1 1-3 0-3M4 9c4-5 12-3 13 4" stroke="#c8c8c8" strokeWidth="1.500" />
          <path d="M13 9c3-2 1-7 5-8h2c4 1 2 6 5 8z" fill="#e8a010" /><path d="M18 9.500h3v2h-3z" fill="#e8a010" />
        </Task>
      </div>
      <Task label="Edge"><path d={edgeE} fill="#0078d7" fillRule="evenodd" /></Task>
      <Task label="Internet Explorer"><path d={ieE} fill="#3aa4ec" fillRule="evenodd" /><path d="M5 21C-2 24 8 5 19 2c4 0 3 3 2 6" stroke="#f2c230" strokeWidth="2" /></Task>
      <Task label="文件资源管理器" run><path d="M2 3h7l2 2h11v15H2z" fill="#f8d775" /><path d="M2 7h20v13H2z" fill="#ffe9a2" /><path d="M6 21v-7h12v7h-3v-4H9v4z" fill="#35a4dc" /></Task>
      <Task label="广联达" run>
        <path d="M23 2C12-1 1 5 1 14c1 10 16 12 20 3 2-6-5-9-8-6-3 2-1 5 2 4-1 4-8 3-8-2 1-6 8-7 12-7-1-1 1-3 4-4z" fill="#1590ea" />
      </Task>
      <Task label="360浏览器" run><circle cx="12" cy="12" r="10.500" fill="#5cb531" stroke="#d8f0c0" /><path d={ieE} fill="#fff" fillRule="evenodd" transform="translate(2 2) scale(.8)" /><path d="M2 18C8 20 19 13 22 5" stroke="#d8f0c0" strokeWidth="1.500" /></Task>
      <Task label="钢筋算量软件" run active>
        <rect width="24" height="24" rx="4" fill="#0f94f4" />
        <path d="M9.500 6.500c0-2.500 3-2.500 3 0V19M4.500 14c0-2.500 1.500-2.500 4-2.500h8c3.500 0 3.500-3.500.5-3.500M6.500 14.500c1 5 10.500 5 11.500 0" stroke="#fff" strokeWidth="2" />
      </Task>
      <Task label="笔记" run><rect x="1" y="1" width="22" height="22" rx="2" fill="#f09a1c" /><path d="M4 5h13l2 14H6z" fill="#fff" /><path d="M7 9h8M7 12h8M8 15h6" stroke="#a86a20" /><path d="M22 3l-9 12-2 3 3-1 9-12z" fill="#8a4b14" stroke="#ffe0a0" strokeWidth=".6" /></Task>
      <Task label="广材" run><rect width="24" height="24" rx="4" fill="#27c063" /><path d="M6 6h4M8.500 6v12M6 18h4M8.500 12h9M17 9.500v5" stroke="#fff" strokeWidth="2.400" /></Task>
      <div className="ml-auto flex shrink-0 items-center text-xs leading-4">
        <span className="w-[34px]">链接</span>
        <span className="w-[66px] text-center leading-[17px]">24%<br />CPU使用</span>
        <svg viewBox="0 0 12 7" className="ml-[11px] h-[7px] w-3" fill="none" stroke="#fff" strokeWidth="1.200"><path d="M.5 6.500L6 1l5.500 5.500" /></svg>
        <svg viewBox="0 0 16 12" className="ml-[34px] h-3 w-4" fill="none" stroke="#fff"><path d="M5.500 3.500h9v6h-9M15.500 5v3M1.500 0v2M4.500 0v2M.5 2.500h5v2L4 6H2L.5 4.500M3 6v4h3" /><path d="M7 5h6v3H7z" fill="#fff" /></svg>
        <svg viewBox="0 0 16 14" className="ml-2 h-[14px] w-4" fill="none" stroke="#fff"><path d="M.5 5v4h3l3 3V2l-3 3zM9 5c1 1 1 3 0 4M11 3c2.500 2 2.500 6 0 8" /><path d="M13 1c3.500 3 3.500 9 0 12" stroke="#888" /></svg>
        <svg viewBox="0 0 23 14" className="ml-2 h-[14px] w-[23px]" fill="none" stroke="#fff"><rect x=".5" y=".5" width="22" height="13" /><path d="M3 4.500h17M3 7h17" strokeDasharray="1.500 1" /><path d="M6 10.500h11" /></svg>
        <span className="ml-3 w-[26px]">中</span>
        <svg viewBox="0 0 16 16" className="h-4 w-4"><path d="M1 3L14 0l2 13-13 3z" fill="#f4511e" /><path d="M12 4C8 3 5 4 5.500 6c.5 2 6 1 6 3.500 0 2-4 2.500-7 1.500" stroke="#fff" strokeWidth="2" fill="none" /></svg>
        <span className="ml-[14px] w-[64px] text-center leading-[18px]">12:51<br />2018/5/25</span>
        <span className="relative ml-[16px] mr-[18px] h-6 w-6">
          <svg viewBox="0 0 16 16" className="h-4 w-4"><path d="M0 1h16v11H8l-4 4v-4H0z" fill="#fff" /><path d="M3 4h10M3 6.500h10M3 9h7" stroke="#000" /></svg>
          <span className="absolute bottom-0 right-0 h-4 w-4 rounded-full border border-[#666] bg-[#222] text-center text-[10px] font-bold leading-[14px]">1</span>
        </span>
      </div>
    </div>
  );
}

export default function App() {
  return (
    <div className="relative flex h-screen w-full cursor-default flex-col overflow-hidden bg-[#f0f0f0] font-['Open_Sans','Noto_Sans_CJK_SC',sans-serif] text-xs leading-4 text-black">
      <TitleBar />
      <ImeBar />
      <div className="absolute right-[227px] top-[-30px] z-20 flex h-12 w-12 items-end justify-center rounded-full border-2 border-[#e8e8e8] bg-[#3fc463] pb-1 text-[11px] font-bold leading-3 text-white shadow-md">74</div>
      <MenuBar />
      <MainToolbar />
      <main className="flex min-h-0 flex-1 gap-[6px]">
        <NavPanel />
        <div className="flex min-w-0 flex-1 flex-col">
          <MemberToolbar />
          <div className="flex min-h-0 flex-1">
            <MemberPanel />
            <PropertyPanel />
          </div>
        </div>
      </main>
      <StatusBar />
      <Taskbar />
    </div>
  );
}
